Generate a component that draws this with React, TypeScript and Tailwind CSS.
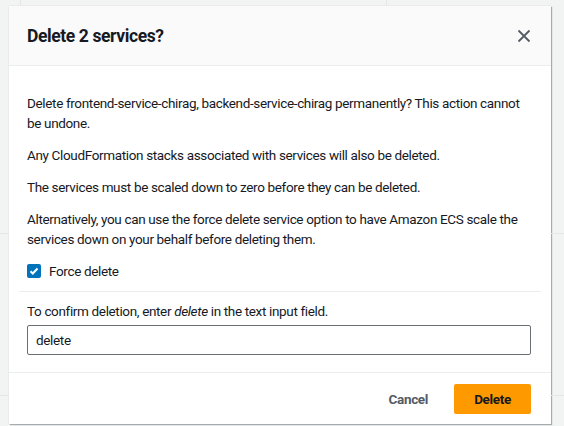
import React from 'react';

function CloseIcon() {
  return (
    <svg width="14" height="14" viewBox="0 0 14 14" fill="none" stroke="#545b64" strokeWidth="1.8">
      <path d="M1.5 1.5l11 11M12.5 1.5l-11 11" />
    </svg>
  );
}

function CheckedBox() {
  return (
    <span className="w-[14px] h-[14px] rounded-[2px] bg-[#0073bb] flex items-center justify-center shrink-0">
      <svg width="10" height="10" viewBox="0 0 10 10" fill="none" stroke="white" strokeWidth="2">
        <path d="M1.5 5.2l2.3 2.3 4.7-5" />
      </svg>
    </span>
  );
}

export default function App(): React.ReactNode {
  return (
    <div className="relative w-[564px] h-[426px] overflow-hidden bg-[#f2f3f3] font-['Roboto',sans-serif] text-[13.5px] tracking-[-0.35px] text-[#16191f]">
      {/* page behind the dialog */}
      <div className="absolute left-[20px] top-0 h-[6px] border-l border-[#e4e7e7]" />
      <div className="absolute left-[386px] top-0 h-[6px] border-l border-[#e4e7e7]" />
      <div className="absolute left-0 top-[233px] w-[9px] border-t border-[#e4e7e7]" />
      <div className="absolute left-0 top-[395px] w-[9px] border-t border-[#e4e7e7]" />
      <div className="absolute right-0 top-[233px] w-[13px] border-t border-[#e4e7e7]" />
      <div className="absolute right-0 top-[395px] w-[13px] border-t border-[#e4e7e7]" />

      <div className="pt-[6px] pl-[9px]">
        <div className="w-[542px] bg-white shadow-[1px_1px_1px_rgba(0,28,36,0.3),0_0_1px_rgba(0,28,36,0.2)]">
          <div className="h-[60px] bg-[#fafafa] border-b border-[#eaeded] pl-[18px] pr-[20px] flex items-center justify-between">
            <h2 className="text-[17.5px] tracking-[-0.4px] font-bold leading-[22px]">Delete 2 services?</h2>
            <CloseIcon />
          </div>

          <div className="pt-[27px] pl-[18px] pr-[20px] leading-[20px] flex flex-col gap-[12px]">
            <p>Delete frontend-service-chirag, backend-service-chirag permanently? This action cannot be undone.</p>
            <p>Any CloudFormation stacks associated with services will also be deleted.</p>
            <p>The services must be scaled down to zero before they can be deleted.</p>
            <p>Alternatively, you can use the force delete service option to have Amazon ECS scale the services down on your behalf before deleting them.</p>
            <label className="flex items-center gap-[8px]">
              <CheckedBox />
              <span>Force delete</span>
            </label>
          </div>

          <div className="mx-[10px] mt-[10px] border-t border-[#eaeded]" />

          <div className="pt-[9px] pb-[17px] pl-[18px] pr-[20px] leading-[20px]">
            <p>
              To confirm deletion, enter <em>delete</em> in the text input field.
            </p>
            <div className="mt-[4px] h-[30px] border border-[#687078] rounded-[2px] px-[8px] flex items-center">
              delete
            </div>
          </div>

          <div className="border-t border-[#eaeded] pt-[11px] pb-[10px] pl-[18px] pr-[20px] flex justify-end items-center gap-[8px]">
            <button className="h-[30px] px-[18px] font-bold text-[#545b64]">Cancel</button>
            <button className="h-[30px] w-[77px] rounded-[2px] bg-[#ff9900] font-bold text-[#16191f]">Delete</button>
          </div>
        </div>
      </div>
    </div>
  );
}
